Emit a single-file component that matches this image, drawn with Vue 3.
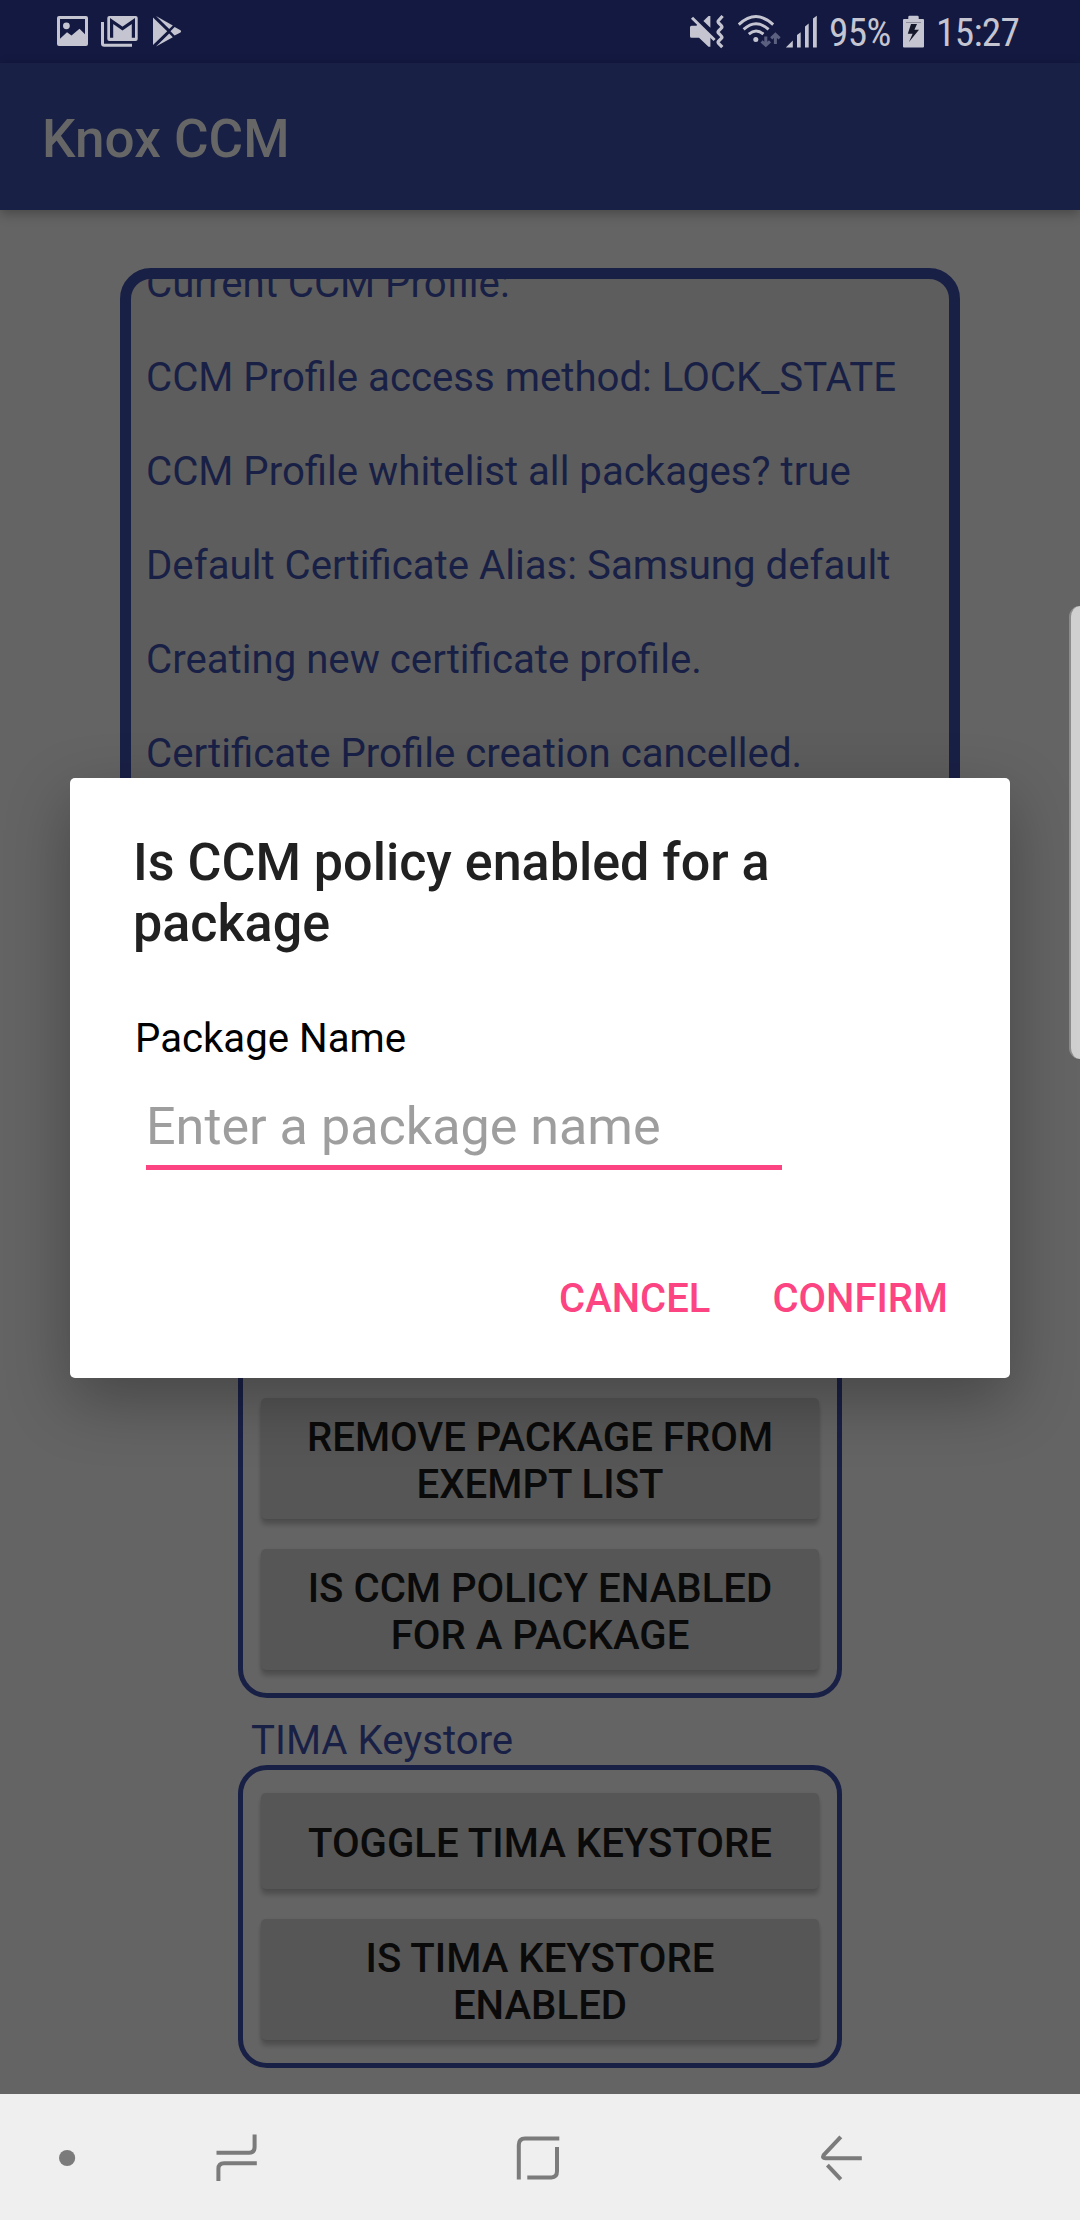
<script setup>
import { ref } from 'vue'

const packageName = ref('')

const logLines = [
  'Current CCM Profile:',
  'CCM Profile access method: LOCK_STATE',
  'CCM Profile whitelist all packages? true',
  'Default Certificate Alias: Samsung default',
  'Creating new certificate profile.',
  'Certificate Profile creation cancelled.'
]

const ccmActions = [
  ['REMOVE PACKAGE FROM', 'EXEMPT LIST'],
  ['IS CCM POLICY ENABLED', 'FOR A PACKAGE']
]
</script>

<template>
  <div class="screen">
    <header class="status">
      <div class="notifications">
        <svg class="i-image" width="31" height="63" viewBox="0 0 31 63">
          <rect y="16" width="31" height="30" rx="2" fill="#c5c5d1" />
          <path d="M3 19H28V34.3L22.5 28.7L14.5 35.5L10 32.3L3 38.7Z" fill="#131940" />
          <circle cx="9.4" cy="25.8" r="3.4" fill="#c5c5d1" />
        </svg>
        <svg class="i-mail" width="37" height="63" viewBox="0 0 37 63">
          <path d="M1.5 22V43.5Q1.5 45.3 3.3 45.3H31" fill="none" stroke="#c5c5d1" stroke-width="3" />
          <rect x="6.3" y="16" width="30.4" height="25" rx="2" fill="#c5c5d1" />
          <path d="M10.6 37.8V21L21.5 28.6L32.4 21V37.8" fill="none" stroke="#131940" stroke-width="3.2" />
        </svg>
        <svg class="i-play" width="29" height="63" viewBox="0 0 29 63">
          <g fill="#c5c5d1">
            <path d="M0 17.5L14.2 31.3L0 45Z" />
            <path d="M3 16L19.8 25.4L16.2 29Z" />
            <path d="M3 46.6L19.8 37.2L16.2 33.6Z" />
            <path d="M21.6 27L27.5 30.2Q28.8 31.3 27.5 32.4L21.6 35.6L17.5 31.3Z" />
          </g>
        </svg>
      </div>
      <div class="system">
        <svg width="34" height="63" viewBox="0 0 34 63">
          <g fill="#c5c5d1">
            <path d="M0 27.3Q0 25.8 1.5 25.8H6.5L8 23.5L20.4 36V46.8H18.5L9 37.7H1.5Q0 37.7 0 36.2Z" />
            <path d="M13.4 21L18.5 16H20.4V27.8Z" />
          </g>
          <g fill="none" stroke="#c5c5d1">
            <path d="M2 17.8L24.6 40" stroke-width="3" />
            <path d="M32.6 16L28.6 20.5Q27.6 21.7 28.6 22.8L31.3 25.6Q32.5 26.9 31.3 28.1L28.6 30.8Q27.5 32 28.6 33.2L31.3 36Q32.5 37.2 31.3 38.4L28.6 41.2Q27.6 42.3 28.6 43.4L32.3 47.2" stroke-width="3.2" />
          </g>
        </svg>
        <svg class="i-wifi" width="43" height="63" viewBox="0 0 43 63">
          <g fill="none" stroke="#c5c5d1" stroke-width="2.9">
            <path d="M.8 24.6Q18 8.6 35.2 24.6" />
            <path d="M5.6 29.4Q18 18.2 30.6 29.4" />
            <path d="M10.8 34.2Q18 27.8 25.4 34.2" />
          </g>
          <circle cx="17.8" cy="39.4" r="2.5" fill="#c5c5d1" />
          <g fill="none" stroke="#5c6080" stroke-width="3">
            <path d="M27.8 36.5V45M23.6 41.3L27.8 45.3L32 41.3" />
            <path d="M37.4 44V35M33.2 38.3L37.4 34.3L41.6 38.3" />
          </g>
        </svg>
        <svg class="i-signal" width="32" height="63" viewBox="0 0 32 63">
          <g fill="#c5c5d1">
            <path d="M.8 47.5L7.8 40.6V47.5Z" />
            <path d="M12 35L15.7 32.2V47.5H12Z" />
            <path d="M20 26.6L23.7 23.6V47.5H20Z" />
            <path d="M28 18.6L31.8 15.8V47.5H28Z" />
          </g>
        </svg>
        <span class="percent">95%</span>
        <svg width="21" height="63" viewBox="0 0 21 63">
          <path d="M5.3 19V17Q5.3 15.7 6.6 15.7H14.4Q15.7 15.7 15.7 17V19H20Q21 19 21 20V46.5Q21 47.5 20 47.5H1Q0 47.5 0 46.5V20Q0 19 1 19Z" fill="#c5c5d1" />
          <path d="M3 22.5H18" stroke="#8d8e9e" stroke-width="1" />
          <path d="M8 24H14L11.4 29.7H16L6 42L9.6 33.8H4.8Z" fill="#15172b" />
        </svg>
        <span class="clock">15:27</span>
      </div>
    </header>

    <div class="appbar"><h1>Knox CCM</h1></div>

    <main class="content">
      <section class="log">
        <p v-for="line in logLines" :key="line">{{ line }}</p>
      </section>
      <section class="group ccm">
        <button v-for="a in ccmActions" :key="a[0]" class="action">{{ a[0] }}<br>{{ a[1] }}</button>
      </section>
      <h2 class="group-label">TIMA Keystore</h2>
      <section class="group">
        <button class="action single">TOGGLE TIMA KEYSTORE</button>
        <button class="action">IS TIMA KEYSTORE<br>ENABLED</button>
      </section>
    </main>

    <nav class="navbar">
      <svg width="1080" height="126" viewBox="0 0 1080 126">
        <circle cx="67.1" cy="64" r="8.1" fill="#7b7b7b" />
        <g fill="none" stroke="#7b7b7b" stroke-width="4">
          <path d="M254.6 40.5V53Q254.6 58.7 249 58.7H216.5" />
          <path d="M256.8 69.3H224Q218.4 69.3 218.4 75V87" />
          <path d="M559.3 44.4H525Q518.8 44.4 518.8 51V85.5" />
          <path d="M557 53V77Q557 83.4 551.5 83.4H527.3" />
          <path d="M840.8 42.8L823.6 61.2Q822 64.2 825.4 64.2H861.8" stroke-linejoin="round" />
          <path d="M827.4 71.2L840.8 85.4" />
        </g>
      </svg>
    </nav>

    <div class="edge-handle"></div>

    <div class="dialog" role="dialog">
      <h2 class="dialog-title">Is CCM policy enabled for a package</h2>
      <label class="field-label" for="pkg">Package Name</label>
      <input id="pkg" v-model="packageName" class="field" placeholder="Enter a package name">
      <div class="dialog-actions">
        <button>CANCEL</button>
        <button>CONFIRM</button>
      </div>
    </div>
  </div>
</template>

<style>
body {
  margin: 0;
}
</style>

<style scoped>
.screen {
  position: relative;
  display: flex;
  flex-direction: column;
  width: 1080px;
  height: 2220px;
  overflow: hidden;
  background: #646464;
  font-family: Roboto, sans-serif;
  font-size: 40.18px;
  line-height: 47px;
}
h1, h2, p {
  margin: 0;
  font-weight: 400;
}
button {
  border: 0;
  padding: 0;
  background: none;
  font: inherit;
  font-weight: 500;
}
svg {
  display: block;
  flex: none;
}
.status {
  display: flex;
  justify-content: space-between;
  flex: none;
  box-sizing: border-box;
  height: 63px;
  padding-left: 57px;
  background: #131940;
  color: #c5c5d1;
}
.notifications, .system {
  display: flex;
}
.i-mail {
  margin-left: 13px;
}
.i-play {
  margin-left: 15px;
}
.system {
  width: 390px;
}
.i-wifi {
  margin-left: 14px;
}
.i-signal {
  margin-left: 4px;
}
.percent, .clock {
  flex: none;
  font-size: 39.3px;
  font-stretch: 75%;
  letter-spacing: -0.7px;
  line-height: 47px;
  padding-top: 10px;
}
.percent {
  width: 74px;
  margin-left: 12px;
}
.clock {
  margin-left: 12px;
}
.appbar {
  display: flex;
  align-items: center;
  flex: none;
  box-sizing: border-box;
  height: 147px;
  padding: 5px 42px 0;
  background: #192046;
  box-shadow: 0 4px 11px rgba(0, 0, 0, 0.28);
}
.appbar h1 {
  color: #666;
  font-size: 53px;
  font-weight: 500;
  line-height: 62px;
}
.content {
  display: flex;
  flex-direction: column;
  align-items: center;
  flex: 1;
  padding-top: 58px;
}
.log {
  flex: none;
  box-sizing: border-box;
  width: 840px;
  height: 782px;
  border: 11px solid #192046;
  border-radius: 31px;
  padding: 0 15px;
  overflow: hidden;
  background: #5d5d5d;
  color: #192046;
  white-space: nowrap;
}
.log p {
  margin-bottom: 47px;
}
.log p:first-child {
  margin-top: -19px;
}
.group {
  display: flex;
  flex-direction: column;
  justify-content: flex-end;
  gap: 30px;
  box-sizing: border-box;
  width: 604px;
  border: 5px solid #192046;
  border-radius: 29px;
  padding: 23px 18px;
}
.ccm {
  flex: none;
  height: 598px;
  margin-top: 50px;
}
.group-label {
  width: 578px;
  padding: 19px 13px 1px;
  color: #192046;
  font-size: 40.18px;
}
.action {
  height: 121px;
  padding-top: 4px;
  border-radius: 5px;
  background: #565656;
  box-shadow: 0 6px 4px rgba(0, 0, 0, 0.19), 0 1px 3px rgba(0, 0, 0, 0.1);
  color: #0a0a0a;
  text-align: center;
  white-space: nowrap;
}
.action.single {
  height: 96px;
}
.navbar {
  flex: none;
  height: 126px;
  background: #efefef;
}
.edge-handle {
  position: absolute;
  top: 606px;
  right: 0;
  box-sizing: border-box;
  width: 11px;
  height: 453px;
  border-left: 2px solid #8c8c8c;
  border-radius: 12px 0 0 12px;
  background: #d0d0d0;
}
.dialog {
  position: absolute;
  top: 778px;
  left: 70px;
  box-sizing: border-box;
  width: 940px;
  height: 600px;
  border-radius: 5px;
  padding: 54px 62px 0 63px;
  background: #fff;
  box-shadow: 0 22px 64px rgba(0, 0, 0, 0.3);
}
.dialog-title {
  color: #212121;
  font-size: 52.05px;
  font-weight: 500;
  line-height: 61px;
}
.field-label {
  display: block;
  margin: 61px 0 0 2px;
  color: #000;
}
.field {
  display: block;
  box-sizing: border-box;
  width: 636px;
  height: 74px;
  margin: 34px 0 0 13px;
  border: 0;
  border-bottom: 5px solid #fc4482;
  padding: 0 0 8px;
  outline: 0;
  background: none;
  font: 400 52.1px/61px Roboto, sans-serif;
}
.field::placeholder {
  color: #9e9e9e;
  opacity: 1;
}
.dialog-actions {
  display: flex;
  justify-content: flex-end;
  gap: 62px;
  margin-top: 105px;
}
.dialog-actions button {
  color: #fc4482;
  font-size: 40px;
}
</style>
